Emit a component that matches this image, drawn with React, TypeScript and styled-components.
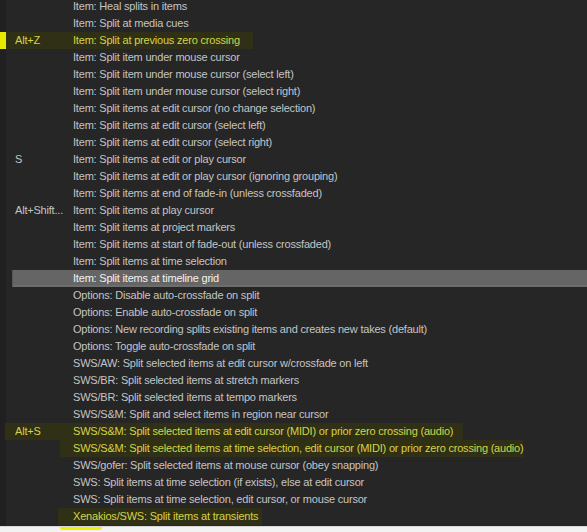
import React from "react";
import styled, { createGlobalStyle } from "styled-components";

const Global = createGlobalStyle`
  html, body { margin: 0; padding: 0; background: #f2f2f2; }
  #root { width: 587px; height: 532px; overflow: hidden; }
`;

const Page = styled.div`
  width: 587px;
  height: 532px;
  display: flex;
  flex-direction: column;
  overflow: hidden;
  font-family: "Liberation Sans", Arial, sans-serif;
  font-size: 11px;
  letter-spacing: -0.2px;
`;

const Panel = styled.div`
  height: 526px;
  flex: none;
  overflow: hidden;
  background: linear-gradient(to right, #202020 0 6px, #262626 6px);
`;

const List = styled.div`
  margin-top: -2px;
  display: flex;
  flex-direction: column;
`;

type RowProps = {
  $selected?: boolean;
  $markFrom?: number;
  $markTo?: number;
  $edge?: boolean;
};

const OLIVE = "#303016";

const Row = styled.div<RowProps>`
  height: 17px;
  line-height: 17px;
  display: grid;
  grid-template-columns: 58px 1fr;
  padding-left: 15px;
  white-space: nowrap;
  color: ${(p) => (p.$selected ? "#f2f2f2" : p.$markTo ? "#d4d448" : "#c4c4c4")};
  ${(p) =>
    p.$selected
      ? `
    margin-left: 12px;
    padding-left: 3px;
    background: #656565;
    box-shadow: inset 1px 0 0 #555, inset 0 -2px 0 #6d6d6d;
  `
      : p.$markTo
      ? `background: linear-gradient(to right,
          ${p.$edge ? "#e8e800 0 6px," : ""}
          transparent ${p.$edge ? 6 : p.$markFrom ?? 0}px,
          ${OLIVE} ${p.$edge ? 6 : p.$markFrom ?? 0}px,
          ${OLIVE} ${p.$markTo}px,
          transparent ${p.$markTo}px);`
      : ""}
`;

const Key = styled.span`
  overflow: hidden;
`;

const Label = styled.span``;

const Footer = styled.div`
  flex: 1;
  background: #f2f2f2;
  border-top: 1px solid #d8d8d8;
  display: flex;
  align-items: flex-start;
`;

const Stroke = styled.div`
  margin-left: 60px;
  width: 42px;
  height: 3px;
  background: #f0f000;
  border-radius: 0 0 20px 20px;
`;

type Item = {
  key?: string;
  label: string;
  selected?: boolean;
  mark?: [number, number];
  edge?: boolean;
};

const items: Item[] = [
  { label: "Item: Heal splits in items" },
  { label: "Item: Split at media cues" },
  { key: "Alt+Z", label: "Item: Split at previous zero crossing", mark: [0, 253], edge: true },
  { label: "Item: Split item under mouse cursor" },
  { label: "Item: Split item under mouse cursor (select left)" },
  { label: "Item: Split item under mouse cursor (select right)" },
  { label: "Item: Split items at edit cursor (no change selection)" },
  { label: "Item: Split items at edit cursor (select left)" },
  { label: "Item: Split items at edit cursor (select right)" },
  { key: "S", label: "Item: Split items at edit or play cursor" },
  { label: "Item: Split items at edit or play cursor (ignoring grouping)" },
  { label: "Item: Split items at end of fade-in (unless crossfaded)" },
  { key: "Alt+Shift...", label: "Item: Split items at play cursor" },
  { label: "Item: Split items at project markers" },
  { label: "Item: Split items at start of fade-out (unless crossfaded)" },
  { label: "Item: Split items at time selection" },
  { label: "Item: Split items at timeline grid", selected: true },
  { label: "Options: Disable auto-crossfade on split" },
  { label: "Options: Enable auto-crossfade on split" },
  { label: "Options: New recording splits existing items and creates new takes (default)" },
  { label: "Options: Toggle auto-crossfade on split" },
  { label: "SWS/AW: Split selected items at edit cursor w/crossfade on left" },
  { label: "SWS/BR: Split selected items at stretch markers" },
  { label: "SWS/BR: Split selected items at tempo markers" },
  { label: "SWS/S&M: Split and select items in region near cursor" },
  { key: "Alt+S", label: "SWS/S&M: Split selected items at edit cursor (MIDI) or prior zero crossing (audio)", mark: [5, 463] },
  { label: "SWS/S&M: Split selected items at time selection, edit cursor (MIDI) or prior zero crossing (audio)", mark: [60, 523] },
  { label: "SWS/gofer: Split selected items at mouse cursor (obey snapping)" },
  { label: "SWS: Split items at time selection (if exists), else at edit cursor" },
  { label: "SWS: Split items at time selection, edit cursor, or mouse cursor" },
  { label: "Xenakios/SWS: Split items at transients", mark: [58, 262] },
];

export default function App() {
  return (
    <>
      <Global />
      <Page>
        <Panel>
          <List>
            {items.map((it, i) => (
              <Row
                key={i}
                $selected={it.selected}
                $markFrom={it.mark?.[0]}
                $markTo={it.mark?.[1]}
                $edge={it.edge}
              >
                <Key>{it.key ?? ""}</Key>
                <Label>{it.label}</Label>
              </Row>
            ))}
          </List>
        </Panel>
        <Footer>
          <Stroke />
        </Footer>
      </Page>
    </>
  );
}
